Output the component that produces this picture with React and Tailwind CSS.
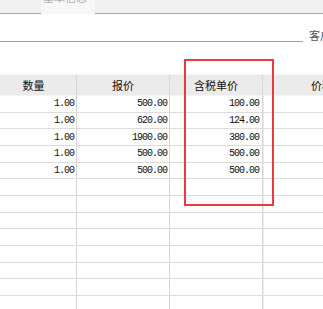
import React from "react";

const rows = [
  { qty: "1.00", price: "500.00", unit: "100.00" },
  { qty: "1.00", price: "620.00", unit: "124.00" },
  { qty: "1.00", price: "1900.00", unit: "380.00" },
  { qty: "1.00", price: "500.00", unit: "500.00" },
  { qty: "1.00", price: "500.00", unit: "500.00" },
  ...Array(8).fill({ qty: "", price: "", unit: "" }),
];

const num = "font-['Liberation_Mono',monospace] text-[10px] tracking-[-1px] text-[#111]";
const cell = "border-r border-[#d6d6d6] flex items-center justify-end pr-[2px]";

const App = () => {
  return (
    <div className="relative w-[323px] h-[309px] overflow-hidden bg-white font-['Noto_Sans_CJK_SC',sans-serif]">
      {/* group box top edge */}
      <div className="flex h-[14px] bg-[#f0f0f0]">
        <div className="w-[41px] shrink-0 border-b border-[#a9a9a9]" />
        <div className="w-[54px] shrink-0 bg-[#f7f7f7] overflow-hidden relative">
          <span className="absolute left-[2px] top-[-8px] text-[11px] leading-none text-[#b0b0b0]">基本信息</span>
        </div>
        <div className="flex-1 border-b border-[#a9a9a9]" />
      </div>

      {/* customer field */}
      <div className="flex items-end h-[28px]">
        <div className="w-[303px] shrink-0 h-full border-b border-[#a0a0a0]" />
        <span className="ml-[6px] pb-[1px] text-[11px] leading-none text-[#555] whitespace-nowrap">客户名称</span>
      </div>

      <div className="h-[32px]" />

      {/* grid */}
      <div className="-ml-[9px] w-[420px]">
        <div className="grid grid-cols-[86px_93px_93px_140px] h-[22px] bg-[#ebebeb] border-t border-[#f4f4f4] border-b border-[#d2d2d2] text-[11px] text-[#111]">
          <div className="border-r border-[#d6d6d6] flex items-center justify-center">数量</div>
          <div className="border-r border-[#d6d6d6] flex items-center justify-center">报价</div>
          <div className="border-r border-[#d6d6d6] flex items-center justify-center">含税单价</div>
          <div className="flex items-center justify-center whitespace-nowrap">价税合计</div>
        </div>
        {rows.map((r, i) => (
          <div
            key={i}
            className="grid grid-cols-[86px_93px_93px_140px] h-[16.67px] border-b border-[#dcdcdc]"
          >
            <div className={cell}>
              <span className={num}>{r.qty}</span>
            </div>
            <div className={cell}>
              <span className={num}>{r.price}</span>
            </div>
            <div className={`${cell} pr-[3px]`}>
              <span className={num}>{r.unit}</span>
            </div>
            <div className="border-l border-[#ececec]" />
          </div>
        ))}
      </div>

      {/* red highlight box */}
      <div className="absolute left-[184px] top-[59px] w-[90px] h-[147px] border-2 border-[#e83a40]" />
    </div>
  );
};

export default App;
